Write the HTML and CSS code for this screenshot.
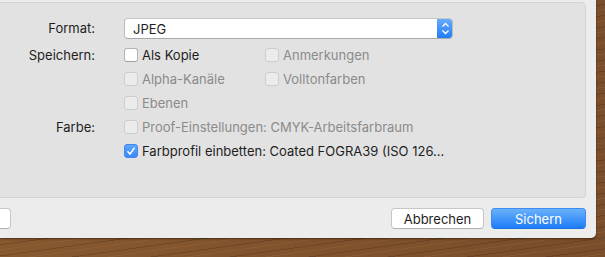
FILE: index.html
```html
<!DOCTYPE html>
<html lang="de">
<head>
  <meta charset="UTF-8">
  <title>Sichern – JPEG</title>
  <link rel="stylesheet" href="styles.css">
</head>
<body>
  <div class="window">
    <div class="panel">
      <div class="form">
        <div class="label">Format:</div>
        <div class="popup wide">
          <span class="popup-value">JPEG</span>
          <span class="stepper">
            <svg width="9" height="13" viewBox="0 0 9 13"><path d="M1.5 4.5 L4.5 1.5 L7.5 4.5 M1.5 8.5 L4.5 11.5 L7.5 8.5" fill="none" stroke="#fff" stroke-width="1.3"/></svg>
          </span>
        </div>

        <div class="label">Speichern:</div>
        <label class="option"><span class="box"></span>Als Kopie</label>
        <label class="option disabled"><span class="box"></span>Anmerkungen</label>

        <div class="label"></div>
        <label class="option disabled"><span class="box"></span>Alpha-Kanäle</label>
        <label class="option disabled"><span class="box"></span>Volltonfarben</label>

        <div class="label"></div>
        <label class="option disabled wide"><span class="box"></span>Ebenen</label>

        <div class="label">Farbe:</div>
        <label class="option disabled wide"><span class="box"></span>Proof-Einstellungen: CMYK-Arbeitsfarbraum</label>

        <div class="label"></div>
        <label class="option wide"><span class="box checked"><svg width="10" height="10" viewBox="0 0 10 10"><path d="M1.5 5.2 L4 8 L8.6 1.6" fill="none" stroke="#fff" stroke-width="1.5"/></svg></span>Farbprofil einbetten: Coated FOGRA39 (ISO 126...</label>
      </div>
    </div>
    <div class="footer">
      <div class="btn stub"></div>
      <div class="spacer"></div>
      <button class="btn">Abbrechen</button>
      <button class="btn primary">Sichern</button>
    </div>
  </div>
</body>
</html>
```

FILE: styles.css
```css
body {
  margin: 0;
  width: 605px;
  height: 257px;
  overflow: hidden;
  font-family: Inter, 'Liberation Sans', sans-serif;
  font-size: 13px;
  color: #1e1e1e;
  background-color: #82552f;
  background-image:
    repeating-linear-gradient(172deg, rgba(60,30,10,0.25) 0 1px, transparent 1px 5px, rgba(170,115,65,0.22) 5px 6px, transparent 6px 11px),
    linear-gradient(90deg, #86592f, #7a4d2b);
}
.window {
  width: 596px;
  height: 238px;
  background: #ececec;
  border-bottom-right-radius: 5px;
  box-shadow: 0 1px 2px rgba(0,0,0,0.45);
  display: flex;
  flex-direction: column;
  padding-top: 2px;
  box-sizing: border-box;
}
.panel {
  width: 586px;
  height: 196px;
  box-sizing: border-box;
  background: #e2e2e2;
  border: 1px solid #d2d2d2;
  border-left: none;
  border-radius: 0 5px 4px 0;
  padding-top: 15px;
}
.form {
  display: grid;
  grid-template-columns: 95px 112px auto;
  column-gap: 29px;
  grid-auto-rows: 24px;
  grid-template-rows: 25px;
}
.form > .wide {
  grid-column: 2 / 4;
}
.label {
  text-align: right;
  line-height: 24px;
}
.label:first-child {
  line-height: 21px;
}
.popup {
  width: 329px;
  height: 21px;
  box-sizing: border-box;
  background: #fff;
  border: 1px solid #bcbcbc;
  border-top-color: #c8c8c8;
  border-bottom-color: #a9a9a9;
  border-radius: 4px;
  display: flex;
  align-items: center;
  overflow: hidden;
}
.popup-value {
  flex: 1;
  padding-left: 8px;
}
.stepper {
  width: 16px;
  height: 21px;
  margin: -1px -1px -1px 0;
  background: linear-gradient(#6aaefc, #1f7af6);
  border-radius: 0 4px 4px 0;
  display: flex;
  align-items: center;
  justify-content: center;
}
.option {
  display: flex;
  align-items: center;
  gap: 4px;
  white-space: nowrap;
}
.option.disabled {
  color: #8b8b8b;
}
.box {
  width: 14px;
  height: 14px;
  box-sizing: border-box;
  background: #fff;
  border: 1px solid #b4b4b4;
  border-bottom-color: #9f9f9f;
  border-radius: 3px;
  display: flex;
  align-items: center;
  justify-content: center;
}
.disabled .box {
  background: #ececec;
  border-color: #cdcdcd;
}
.box.checked {
  background: linear-gradient(#5ea6fb, #3a89f7);
  border-color: #3f87ee;
}
.footer {
  display: flex;
  align-items: flex-start;
  gap: 7px;
  padding: 10px 10px 0 0;
}
.spacer {
  flex: 1;
}
.btn {
  height: 21px;
  box-sizing: border-box;
  font: inherit;
  color: #1e1e1e;
  background: #fff;
  border: 1px solid #c6c6c6;
  border-bottom-color: #b0b0b0;
  border-radius: 4px;
  padding: 0;
  width: 93px;
}
.btn.stub {
  width: 11px;
  border-left: none;
  border-radius: 0 4px 4px 0;
}
.btn.primary {
  width: 95px;
  color: #fff;
  background: linear-gradient(#6ab1fb, #1d7cf7);
  border-color: #3d8cf4;
  border-bottom-color: #1f6fe0;
}
```
